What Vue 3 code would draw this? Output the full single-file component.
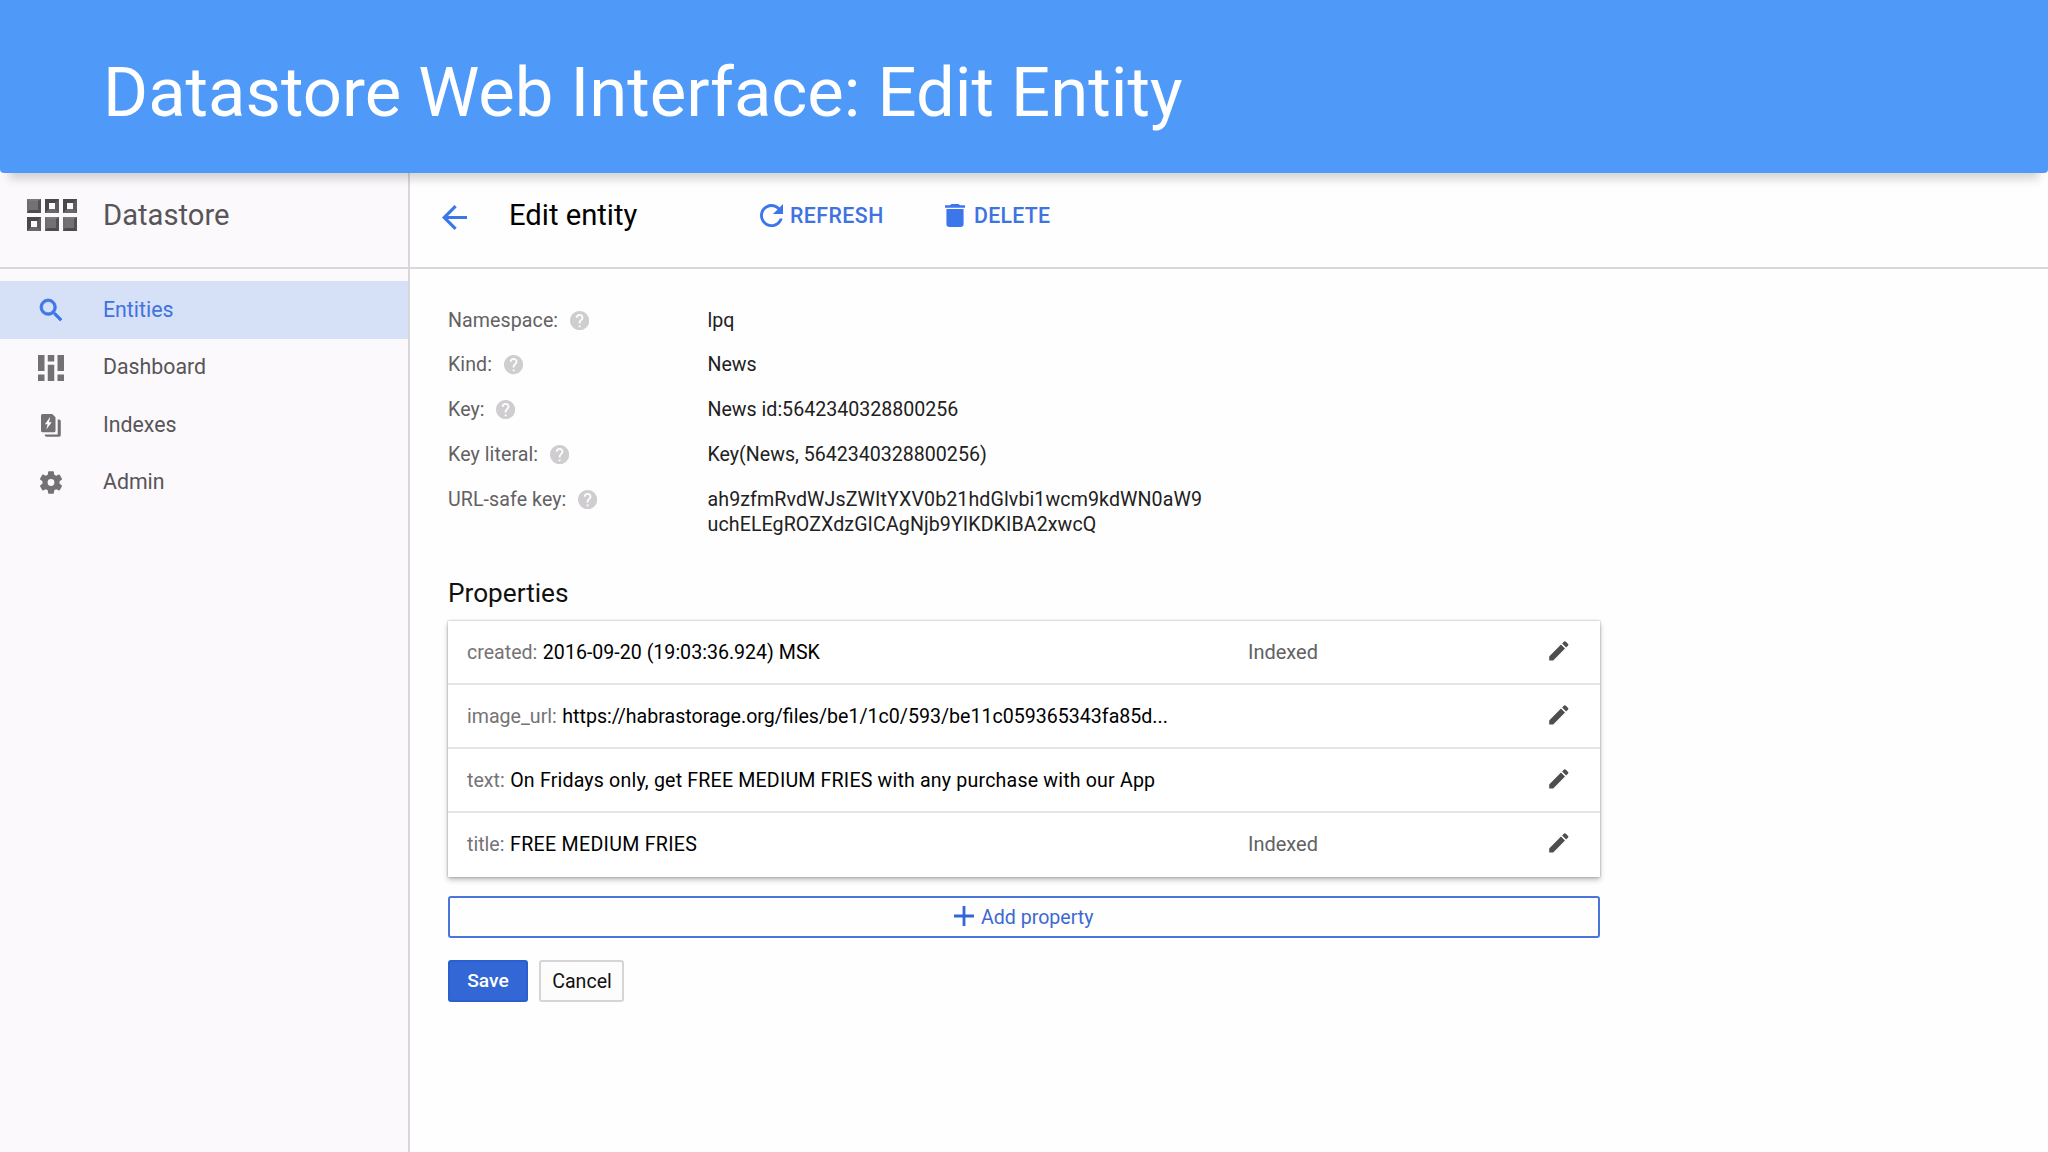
<script setup>
import { ref } from 'vue'

const active = ref('Entities')

const navItems = ['Entities', 'Dashboard', 'Indexes', 'Admin']

// true = solid block, false = hollow block
const logoBlocks = [true, false, false, false, true, true]

const details = [
  { label: 'Namespace:', lines: ['lpq'] },
  { label: 'Kind:', lines: ['News'] },
  { label: 'Key:', lines: ['News id:5642340328800256'] },
  { label: 'Key literal:', lines: ['Key(News, 5642340328800256)'] },
  {
    label: 'URL-safe key:',
    lines: ['ah9zfmRvdWJsZWItYXV0b21hdGlvbi1wcm9kdWN0aW9', 'uchELEgROZXdzGICAgNjb9YIKDKIBA2xwcQ'],
    wide: true
  }
]

const properties = ref([
  { name: 'created', value: '2016-09-20 (19:03:36.924) MSK', indexed: true },
  { name: 'image_url', value: 'https://habrastorage.org/files/be1/1c0/593/be11c059365343fa85d...', indexed: false },
  { name: 'text', value: 'On Fridays only, get FREE MEDIUM FRIES with any purchase with our App', indexed: false },
  { name: 'title', value: 'FREE MEDIUM FRIES', indexed: true }
])
</script>

<template>
  <div class="slide">
    <header class="banner">
      <h1>Datastore Web Interface: Edit Entity</h1>
    </header>

    <div class="console">
      <aside class="sidebar">
        <div class="brand">
          <div class="logo">
            <span v-for="(solid, i) in logoBlocks" :key="i" class="block" :class="{ solid }"></span>
          </div>
          <span class="brand-name">Datastore</span>
        </div>

        <nav class="nav">
          <a
            v-for="item in navItems"
            :key="item"
            class="nav-item"
            :class="{ active: active === item }"
            @click="active = item"
          >
            <span class="nav-icon">
              <svg v-if="item === 'Entities'" class="search" width="22" height="22" viewBox="3 3 17.49 17.49">
                <path d="M15.5 14h-.79l-.28-.27A6.471 6.471 0 0 0 16 9.5 6.5 6.5 0 1 0 9.5 16c1.61 0 3.09-.59 4.23-1.57l.27.28v.79l5 4.99L20.49 19l-4.99-5zm-6 0C7.01 14 5 11.99 5 9.5S7.01 5 9.5 5 14 7.01 14 9.5 11.99 14 9.5 14z" />
              </svg>
              <svg v-else-if="item === 'Dashboard'" width="26" height="26" viewBox="0 0 26 26">
                <path d="M0 0h6.5v16H0zM0 19.5h6.5V26H0zM9.75 0h6.5v6.5h-6.5zM9.75 9.75h6.5V26h-6.5zM19.5 0H26v16h-6.5zM19.5 19.5H26V26h-6.5z" />
              </svg>
              <svg v-else-if="item === 'Indexes'" width="20" height="23" viewBox="0 0 20 23">
                <path d="M1.5 0h9.7l3.3 3.3v13.5a1.5 1.5 0 0 1-1.5 1.5H1.5A1.5 1.5 0 0 1 0 16.8V1.5A1.5 1.5 0 0 1 1.5 0z" />
                <path d="M16.7 5.5H18a1.8 1.8 0 0 1 1.8 1.8V21a1.8 1.8 0 0 1-1.8 1.8H5.5A1.8 1.8 0 0 1 3.700 21v-.6h13z" />
                <path class="bolt" d="M9.3 2.800L3.900 10.200h2.700L5.300 15.600l5.400-7.400H8z" />
              </svg>
              <svg v-else width="22" height="23" viewBox="2.3 2 19.4 20">
                <path d="M19.43 12.98c.04-.32.07-.64.07-.98s-.03-.66-.07-.98l2.11-1.65c.19-.15.24-.42.12-.64l-2-3.46c-.12-.22-.39-.3-.61-.22l-2.49 1c-.52-.4-1.08-.73-1.69-.98l-.38-2.65C14.46 2.18 14.25 2 14 2h-4c-.25 0-.46.18-.49.42l-.38 2.65c-.61.25-1.17.59-1.69.98l-2.49-1c-.23-.09-.49 0-.61.22l-2 3.46c-.13.22-.07.49.12.64l2.11 1.65c-.04.32-.07.65-.07.98s.03.66.07.98l-2.11 1.65c-.19.15-.24.42-.12.64l2 3.46c.12.22.39.3.61.22l2.49-1c.52.4 1.08.73 1.69.98l.38 2.65c.03.24.24.42.49.42h4c.25 0 .46-.18.49-.42l.38-2.65c.61-.25 1.17-.59 1.69-.98l2.49 1c.23.09.49 0 .61-.22l2-3.46c.12-.22.07-.49-.12-.64l-2.11-1.65zM12 15a3 3 0 1 1 0-6 3 3 0 0 1 0 6z" />
              </svg>
            </span>
            <span>{{ item }}</span>
          </a>
        </nav>
      </aside>

      <main class="main">
        <div class="toolbar">
          <svg class="back" width="25" height="25" viewBox="4 4 16 16">
            <path d="M20 11H7.83l5.59-5.59L12 4l-8 8 8 8 1.41-1.41L7.83 13H20v-2z" />
          </svg>
          <h2>Edit entity</h2>
          <button class="tool refresh">
            <svg width="23" height="23" viewBox="4 4 16 16">
              <path d="M17.65 6.35C16.2 4.9 14.21 4 12 4c-4.42 0-7.99 3.58-7.99 8s3.57 8 7.99 8c3.73 0 6.84-2.55 7.73-6h-2.08c-.82 2.33-3.04 4-5.65 4-3.31 0-6-2.69-6-6s2.69-6 6-6c1.66 0 3.14.69 4.22 1.78L13 11h7V4l-2.35 2.35z" />
            </svg>
            <span>REFRESH</span>
          </button>
          <button class="tool delete">
            <svg width="20" height="23" viewBox="5 3 14 18" preserveAspectRatio="none">
              <path d="M6 19c0 1.1.9 2 2 2h8c1.1 0 2-.9 2-2V7H6v12zM19 4h-3.5l-1-1h-5l-1 1H5v2h14V4z" />
            </svg>
            <span>DELETE</span>
          </button>
        </div>

        <div class="content">
          <div v-for="row in details" :key="row.label" class="detail">
            <div class="detail-label">
              <span>{{ row.label }}</span>
              <svg width="19.2" height="19.2" viewBox="2 2 20 20">
                <path d="M12 2C6.48 2 2 6.48 2 12s4.48 10 10 10 10-4.48 10-10S17.52 2 12 2zm1 17h-2v-2h2v2zm2.07-7.75l-.9.92C13.45 12.9 13 13.5 13 15h-2v-.5c0-1.1.45-2.1 1.17-2.83l1.24-1.26c.37-.36.59-.86.59-1.41 0-1.1-.9-2-2-2s-2 .9-2 2H8c0-2.21 1.79-4 4-4s4 1.79 4 4c0 .88-.36 1.68-.93 2.25z" />
              </svg>
            </div>
            <div class="detail-value" :class="{ wide: row.wide }">
              <div v-for="line in row.lines" :key="line">{{ line }}</div>
            </div>
          </div>

          <h3>Properties</h3>
          <div class="card">
            <div v-for="prop in properties" :key="prop.name" class="prop">
              <div class="prop-text" :class="prop.name">
                <span class="prop-name">{{ prop.name }}:</span>
                <span class="prop-value">{{ prop.value }}</span>
              </div>
              <span class="prop-indexed">{{ prop.indexed ? 'Indexed' : '' }}</span>
              <svg class="pencil" width="25.6" height="25.6" viewBox="0 0 24 24">
                <path d="M3 17.25V21h3.75L17.81 9.94l-3.75-3.75L3 17.25zM20.71 7.04a1 1 0 0 0 0-1.41l-2.34-2.34a1 1 0 0 0-1.41 0l-1.83 1.83 3.75 3.75 1.83-1.83z" />
              </svg>
            </div>
          </div>

          <button class="add">
            <svg width="20" height="20" viewBox="0 0 20 20">
              <path d="M8.6 0h2.8v8.6H20v2.8h-8.6V20H8.6v-8.6H0V8.6h8.6z" />
            </svg>
            <span>Add property</span>
          </button>

          <div class="actions">
            <button class="save">Save</button>
            <button class="cancel">Cancel</button>
          </div>
        </div>
      </main>
    </div>
  </div>
</template>

<style>
body {
  margin: 0;
  background: #fefefe;
}
</style>

<style scoped>
.slide {
  width: 2048px;
  height: 1152px;
  overflow: hidden;
  display: flex;
  flex-direction: column;
  font-family: Roboto, sans-serif;
  background: #fefefe;
}

h1,
h2,
h3 {
  margin: 0;
  font-weight: 400;
}

button {
  font-family: inherit;
  padding: 0;
  margin: 0;
  background: none;
  border: none;
  cursor: pointer;
}

svg {
  display: block;
  flex-shrink: 0;
  fill: currentColor;
}

.banner {
  position: relative;
  z-index: 1;
  box-sizing: border-box;
  height: 173px;
  flex-shrink: 0;
  padding: 46px 0 0 103px;
  background: #4f9af8;
  border-radius: 0 0 4px 4px;
  box-shadow: 0 15px 9px -9px rgba(0, 0, 0, 0.17);
}

.banner h1 {
  color: #fff;
  font-size: 68.8px;
  line-height: 93px;
}

.console {
  flex: 1;
  display: flex;
  min-height: 0;
}

/* sidebar */
.sidebar {
  box-sizing: border-box;
  width: 410px;
  flex-shrink: 0;
  background: #fbf9fc;
  border-right: 2px solid #d9d7da;
}

.brand,
.toolbar {
  box-sizing: border-box;
  height: 96px;
  padding-bottom: 10px;
  border-bottom: 2px solid #d9d7da;
  display: flex;
  align-items: center;
}

.logo {
  width: 76px;
  padding-left: 27px;
  display: grid;
  grid-template-columns: repeat(3, 14.4px);
  grid-auto-rows: 14.4px;
  gap: 3.4px;
}

.block {
  box-sizing: border-box;
  border: 4px solid;
  border-color: #4a484a #5d5b5d #6a686a #4a484a;
}

.block.solid {
  background: #737173;
  border-width: 2px 3px 3px 2px;
  border-color: #7b797b #535153 #4d4b4d #6e6c6e;
}

.brand-name {
  font-size: 29.2px;
  color: #575557;
}

.nav {
  padding-top: 12.4px;
}

.nav-item {
  display: flex;
  align-items: center;
  height: 57.6px;
  font-size: 21.3px;
  line-height: 24px;
  color: #575557;
  cursor: pointer;
}

.nav-icon {
  width: 102px;
  margin-right: 1px;
  display: flex;
  justify-content: center;
  color: #737173;
}

.nav-item span:last-child {
  margin-bottom: 1px;
}

.nav-item.active {
  background: #d6e0f6;
  color: #3f73e0;
}

.nav-item.active .nav-icon {
  color: #3b76ea;
}

.search {
  overflow: visible;
  stroke: currentColor;
  stroke-width: 0.6;
}

.bolt {
  fill: #fff;
}

/* toolbar */
.main {
  flex: 1;
}

.toolbar {
  padding-left: 32px;
}

.back {
  margin-top: 4px;
  color: #3b76ea;
}

.toolbar h2 {
  width: 251px;
  margin-left: 42px;
  font-size: 29.2px;
  color: #000;
}

.tool {
  display: flex;
  align-items: center;
  font-size: 21.3px;
  font-weight: 500;
  color: #3f73e0;
}

.tool svg {
  color: #3b76ea;
  margin-top: 1px;
}

.refresh {
  width: 185px;
  letter-spacing: 0.45px;
}

.refresh span {
  margin-left: 7px;
}

.delete {
  letter-spacing: 0.25px;
}

.delete span {
  margin-left: 9px;
}

/* entity details */
.content {
  box-sizing: border-box;
  width: 1190px;
  padding: 38.5px 0 0 38px;
}

.detail {
  display: flex;
  margin-bottom: 19.2px;
  font-size: 19.6px;
  line-height: 25.6px;
}

.detail-label {
  display: flex;
  align-items: center;
  align-self: flex-start;
  width: 259.5px;
  letter-spacing: 0.08px;
  color: #636163;
}

.detail-label svg {
  margin-left: 11.5px;
  color: #cfcdcf;
}

.detail-value {
  color: #212121;
}

.detail-value.wide {
  letter-spacing: 0.1px;
}

h3 {
  margin-top: 38.8px;
  font-size: 26.2px;
  line-height: 32px;
  color: #111;
}

/* properties */
.card {
  margin-top: 12px;
  background: #fff;
  box-shadow: 0 0 2px rgba(60, 50, 65, 0.45), 0 3px 5px rgba(60, 50, 65, 0.3);
}

.prop {
  box-sizing: border-box;
  height: 64px;
  padding-left: 19px;
  display: flex;
  align-items: center;
  border-bottom: 2px solid #e6e4e7;
}

.prop:last-child {
  border-bottom-color: transparent;
}

.prop-text {
  width: 781px;
  padding-top: 2px;
  font-size: 19.6px;
  white-space: nowrap;
}

.prop-name {
  color: #757375;
  margin-right: 5.5px;
}

.prop-value {
  color: #000;
}

.text .prop-value {
  letter-spacing: 0.18px;
}

.title .prop-value {
  letter-spacing: 0.3px;
}

.prop-indexed {
  width: 298px;
  font-size: 20px;
  color: #636163;
}

.pencil {
  margin-bottom: 1px;
  color: #4f4d50;
}

.add {
  box-sizing: border-box;
  width: 100%;
  height: 42px;
  margin-top: 19px;
  display: flex;
  align-items: center;
  justify-content: center;
  gap: 6.5px;
  border: 2px solid #4a76dc;
  border-radius: 3px;
  font-size: 19.6px;
  color: #3f68d0;
}

.add svg {
  margin-top: -2px;
  color: #3367d6;
}

.add span {
  padding-top: 1px;
}

.actions {
  display: flex;
  gap: 11px;
  margin-top: 22px;
}

.actions button {
  box-sizing: border-box;
  height: 42px;
  border-radius: 3px;
}

.save {
  width: 80px;
  background: #3367d6;
  border: 2px solid #2a5fce;
  color: #fff;
  font-size: 19.2px;
  font-weight: 500;
}

.cancel {
  width: 85px;
  padding: 1px 0 0 1px;
  background: #fdfcfd;
  border: 2px solid #d6d4d7;
  color: #111;
  font-size: 19.6px;
}
</style>
